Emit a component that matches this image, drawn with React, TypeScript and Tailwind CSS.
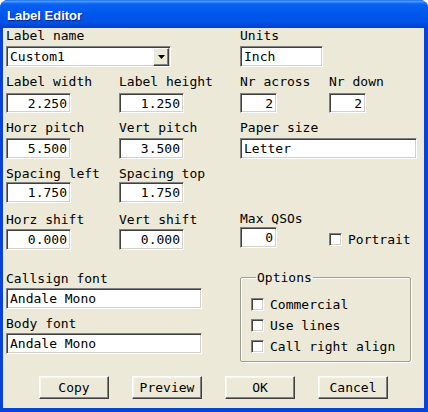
import type { ReactNode } from 'react';

const sunken =
  'bg-white border border-[#808080] border-r-white border-b-white shadow-[inset_1px_1px_0_#404040,inset_-1px_-1px_0_#d4d0c8]';

function Label({ children }: { children: ReactNode }) {
  return <div className="h-[15px] leading-[15px] whitespace-nowrap">{children}</div>;
}

function Field({ label, gap, className, children }: { label: string; gap: string; className?: string; children: ReactNode }) {
  return (
    <div className={`flex flex-col ${gap} ${className ?? ''}`}>
      <Label>{label}</Label>
      {children}
    </div>
  );
}

function Input({ w, right, children }: { w: string; right?: boolean; children: ReactNode }) {
  return (
    <div className={`${w} h-[21px] ${sunken} flex items-center px-[3px] leading-[15px] whitespace-nowrap ${right ? 'justify-end' : ''}`}>
      {children}
    </div>
  );
}

function Check({ label }: { label: string }) {
  return (
    <div className="flex items-center gap-[6px] h-[21px]">
      <span className={`w-[13px] h-[13px] ${sunken}`} />
      <span className="leading-[15px]">{label}</span>
    </div>
  );
}

function Button({ children }: { children: ReactNode }) {
  return (
    <button className="w-[70px] h-[23px] bg-[#ece9d8] border border-white border-r-[#404040] border-b-[#404040] shadow-[inset_-1px_-1px_0_#808080,inset_1px_1px_0_#f7f6f1] leading-[15px] text-black">
      {children}
    </button>
  );
}

export default function App() {
  return (
    <div className="w-[428px] h-[412px] bg-white">
      <div className="w-full h-full flex flex-col rounded-t-[8px] overflow-hidden bg-[#0842d6]">
        {/* title bar */}
        <div className="h-[28px] shrink-0 pl-[7px] pt-[8px] bg-[linear-gradient(180deg,#1a6cf0_0%,#4a9cff_5%,#0a62f2_14%,#0058ee_45%,#0052e4_80%,#0040cc_100%)]">
          <div className="text-white font-bold text-[13px] leading-[15px] font-['Liberation_Sans',Arial,sans-serif] [text-shadow:1px_1px_0_#0a2a8a]">
            Label Editor
          </div>
        </div>

        <div className="flex-1 ml-[3px] mr-[4px] mb-[4px] bg-[#ece9d8] text-black text-[13px] font-['DejaVu_Sans_Mono',monospace] flex flex-col">
          <div className="grid grid-cols-[113px_121px_89px_1fr] auto-rows-[39px] gap-y-[7px] pl-[3px]">
            <Field label="Label name" gap="gap-[3px]" className="col-span-2">
              <div className={`w-[165px] h-[21px] ${sunken} flex items-center pl-[3px] pr-[1px]`}>
                <span className="flex-1 leading-[15px]">Custom1</span>
                <span className="w-[16px] h-[18px] bg-[#ece9d8] border border-white border-r-[#404040] border-b-[#404040] shadow-[inset_-1px_-1px_0_#808080] flex items-center justify-center">
                  <svg width="7" height="4" viewBox="0 0 7 4">
                    <path d="M0 0h7L3.5 4z" fill="#000" />
                  </svg>
                </span>
              </div>
            </Field>
            <Field label="Units" gap="gap-[3px]" className="col-span-2">
              <Input w="w-[83px]">Inch</Input>
            </Field>

            <Field label="Label width" gap="gap-[4px]">
              <Input w="w-[65px]" right>2.250</Input>
            </Field>
            <Field label="Label height" gap="gap-[4px]">
              <Input w="w-[65px]" right>1.250</Input>
            </Field>
            <Field label="Nr across" gap="gap-[4px]">
              <Input w="w-[37px]" right>2</Input>
            </Field>
            <Field label="Nr down" gap="gap-[4px]">
              <Input w="w-[37px]" right>2</Input>
            </Field>

            <Field label="Horz pitch" gap="gap-[3px]">
              <Input w="w-[65px]" right>5.500</Input>
            </Field>
            <Field label="Vert pitch" gap="gap-[3px]">
              <Input w="w-[65px]" right>3.500</Input>
            </Field>
            <Field label="Paper size" gap="gap-[3px]" className="col-span-2">
              <Input w="w-[177px]">Letter</Input>
            </Field>

            <Field label="Spacing left" gap="gap-[1px]">
              <Input w="w-[65px]" right>1.750</Input>
            </Field>
            <Field label="Spacing top" gap="gap-[1px]">
              <Input w="w-[65px]" right>1.750</Input>
            </Field>
            <div className="col-span-2" />

            <Field label="Horz shift" gap="gap-[2px]">
              <Input w="w-[65px]" right>0.000</Input>
            </Field>
            <Field label="Vert shift" gap="gap-[2px]">
              <Input w="w-[65px]" right>0.000</Input>
            </Field>
            <Field label="Max QSOs" gap="gap-[1px]" className="-mt-[1px]">
              <Input w="w-[37px]" right>0</Input>
            </Field>
            <div className="self-end mb-[4px] h-[15px] flex items-center gap-[6px]">
              <span className={`w-[13px] h-[13px] ${sunken}`} />
              <span className="leading-[15px]">Portrait</span>
            </div>
          </div>

          <div className="flex items-start mt-[19px]">
            <div className="w-[237px] pl-[3px] mt-[1px] flex flex-col gap-[7px]">
              <Field label="Callsign font" gap="gap-[2px]">
                <Input w="w-[196px]">Andale Mono</Input>
              </Field>
              <Field label="Body font" gap="gap-[2px]">
                <Input w="w-[196px]">Andale Mono</Input>
              </Field>
            </div>
            <fieldset className="w-[171px] border border-[#a09f94] shadow-[1px_1px_0_#fff,inset_1px_1px_0_#fff] rounded-[2px] pl-[10px] pt-[9px] pb-[4px]">
              <legend className="ml-[5px] px-[1px] leading-[15px]">Options</legend>
              <Check label="Commercial" />
              <Check label="Use lines" />
              <Check label="Call right align" />
            </fieldset>
          </div>

          <div className="flex gap-[23px] pl-[36px] mt-[14px]">
            <Button>Copy</Button>
            <Button>Preview</Button>
            <Button>OK</Button>
            <Button>Cancel</Button>
          </div>
        </div>
      </div>
    </div>
  );
}
